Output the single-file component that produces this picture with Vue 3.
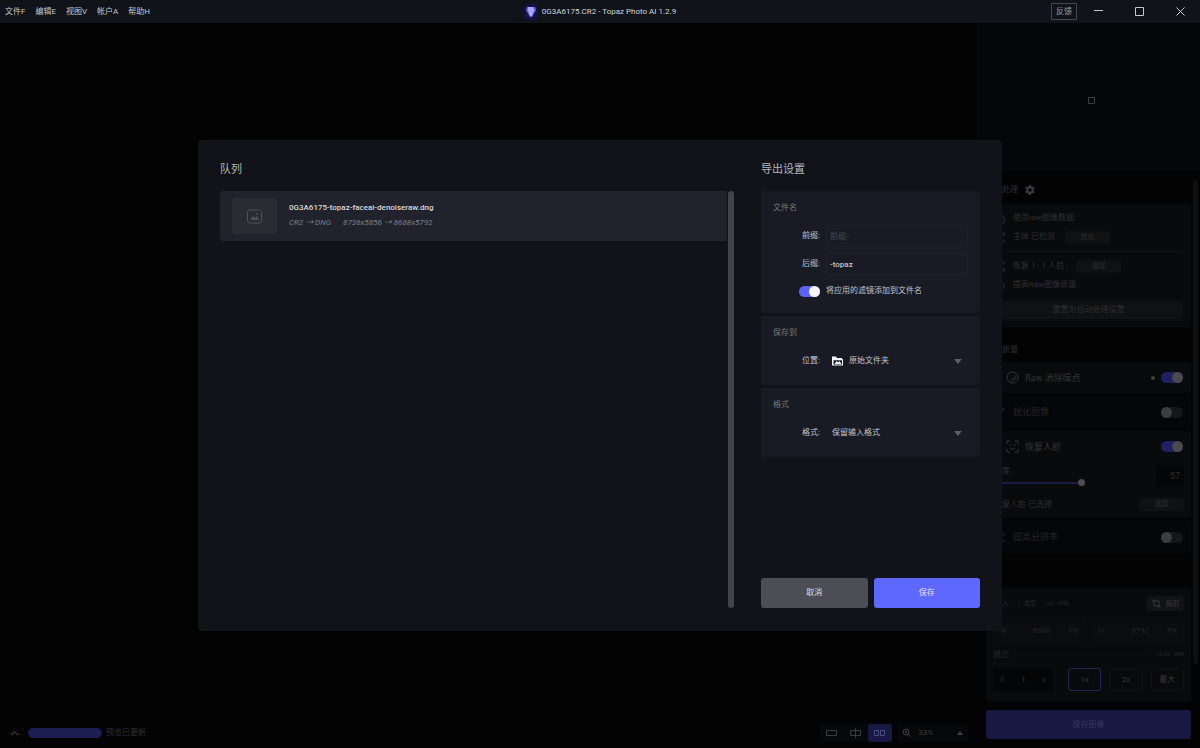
<script setup>
import { ref } from 'vue'

const menus = ['文件F', '编辑E', '视图V', '帐户A', '帮助H']
const suffix = ref('-topaz')
const prefix = ref('')
const addFilters = ref(true)
const denoise = ref(true)
const sharpen = ref(false)
const face = ref(true)
const upscale = ref(false)
const strength = ref(57)
</script>

<template>
  <div class="app">
    <header class="titlebar">
      <nav class="menus">
        <button v-for="m in menus" :key="m">{{ m }}</button>
      </nav>
      <div class="title">
        <svg class="logo" width="14" height="16" viewBox="0 0 14 16">
          <rect width="14" height="16" rx="4" fill="#15124a" />
          <path d="M3 3h8l1 3-4 7H6L2 6z" fill="#6a66dd" />
          <path d="M4 3h5l1 3-2 6H6L4 6z" fill="#aaa6ff" />
        </svg>
        <span>0G3A6175.CR2 - Topaz Photo AI 1.2.9</span>
      </div>
      <div class="window">
        <button class="feedback">反馈</button>
        <button aria-label="最小化"><svg width="11" height="11" viewBox="0 0 11 11"><path d="M1 4.500h9" /></svg></button>
        <button aria-label="最大化"><svg width="11" height="11" viewBox="0 0 11 11"><path d="M1.500 1.500h8v8h-8z" /></svg></button>
        <button aria-label="关闭"><svg width="11" height="11" viewBox="0 0 11 11"><path d="M1.500 1.500l8 8M9.500 1.500l-8 8" /></svg></button>
      </div>
    </header>

    <div class="body">
      <main class="stage">
        <footer class="status">
          <button class="up" aria-label="展开"><svg width="9" height="7" viewBox="0 0 9 7"><path d="M1 5l3.500-3L8 5" /></svg></button>
          <div class="progress" role="progressbar" aria-label="进度"></div>
          <span class="grow">预览已更新</span>
          <div class="views">
            <button aria-label="单视图"><svg width="12" height="10" viewBox="0 0 12 10"><path d="M.5 2.500h10v5H.5z" /></svg></button>
            <button aria-label="分割视图"><svg width="12" height="10" viewBox="0 0 12 10"><path d="M5 2.500H.5v5H5M6 2.500h4.500v5H6M5.500 0v10" /></svg></button>
            <button class="on" aria-label="并排视图"><svg width="12" height="10" viewBox="0 0 12 10"><path d="M.5 2.500h4v5h-4zM6.500 2.500h4v5h-4z" /></svg></button>
          </div>
          <button class="zoom">
            <svg width="10" height="10" viewBox="0 0 10 10"><circle cx="4" cy="4" r="3" /><path d="M6 6l3 3M2.500 4h3M4 2.500v3" /></svg>
            <span>33%</span>
            <svg class="solid" width="8" height="6" viewBox="0 0 8 6"><path d="M1 5l3-4 3 4z" /></svg>
          </button>
        </footer>
      </main>

      <aside class="side">
        <section class="navigator"><i></i></section>
        <div class="scroll">
          <div class="panels">
            <h2 class="auto">自动处理
              <svg width="10" height="10" viewBox="0 0 10 10"><circle cx="5" cy="5" r="2.800" stroke-width="2" /><path d="M5 0v2M5 8v2M.7 2.500l1.700 1M7.600 6.500l1.700 1M.7 7.500l1.700-1M7.600 3.500l1.700-1" stroke-width="2" /></svg>
            </h2>
            <section class="card detect">
              <p><svg width="11" height="11" viewBox="0 0 11 11"><path d="M2 1h5l3 3v6H2z" /></svg>使用raw图像数据.</p>
              <p><svg width="11" height="11" viewBox="0 0 11 11"><path d="M1 4V1h3M7 1h3v3M10 7v3H7M4 10H1V7" /><circle cx="5.500" cy="5.500" r="1.500" /></svg>主体 已检测. <button>优化</button></p>
              <hr />
              <p><svg width="11" height="11" viewBox="0 0 11 11"><path d="M1 4V1h3M7 1h3v3M10 7v3H7M4 10H1V7M3.500 6.500l2 1 2-1" /></svg>恢复 1 - 1 人脸 . <button>选择</button></p>
              <p><svg width="11" height="11" viewBox="0 0 11 11"><circle cx="5.500" cy="5.500" r="4.500" /></svg>提高Raw图像质量.</p>
              <button class="reset">重置为自动处理设置</button>
            </section>
            <h2 class="quality">高质量</h2>
            <section class="card tool indent">
              <svg width="13" height="13" viewBox="0 0 13 13"><circle cx="6.500" cy="6.500" r="5.500" /><path class="shade" d="M10 3.500A5 5 0 0 1 3.500 10.200z" /></svg>
              <label for="denoise">Raw 消除噪点</label><b class="dot"></b>
              <input id="denoise" v-model="denoise" type="checkbox" class="switch" />
            </section>
            <section class="card tool off">
              <svg width="11" height="11" viewBox="0 0 11 11"><path d="M1 10h4L10 1z" /></svg>
              <label for="sharpen">锐化图像</label>
              <input id="sharpen" v-model="sharpen" type="checkbox" class="switch" />
            </section>
            <section class="card face">
              <div class="tool indent">
                <svg width="13" height="13" viewBox="0 0 13 13"><path d="M1 4V1h3M9 1h3v3M12 9v3H9M4 12H1V9M4 4v1.500M9 4v1.500M4 8l2.500 1.500L9 8" /></svg>
                <label for="face">恢复人脸</label>
                <input id="face" v-model="face" type="checkbox" class="switch" />
              </div>
              <div class="strength">
                <div>
                  <label for="strength">强度</label>
                  <input id="strength" v-model="strength" type="range" />
                </div>
                <output for="strength">{{ strength }}</output>
              </div>
              <div class="chosen"><span>恢复人脸 已选择</span><button>选择</button></div>
            </section>
            <section class="card tool off">
              <svg width="11" height="11" viewBox="0 0 11 11"><path d="M1 4V1h3M7 1h3v3M10 7v3H7M4 10H1V7" /></svg>
              <label for="upscale">提高分辨率</label>
              <input id="upscale" v-model="upscale" type="checkbox" class="switch" />
            </section>
            <section class="card resize">
              <div class="line"><span>输入</span><small class="grow">| 类型: ~88.3MB</small>
                <button class="crop"><svg width="9" height="9" viewBox="0 0 9 9"><path d="M2 0v7h7M0 2h7v7" /></svg>裁剪</button></div>
              <div class="dims">
                <label><span>W</span><input value="8688" aria-label="宽度" /><span>PX</span></label>
                <label><span>H</span><input value="5792" aria-label="高度" /><span>PX</span></label>
              </div>
              <div class="line out"><span>输出</span><i></i><small>~248.9MB</small></div>
              <div class="scales">
                <label class="custom"><span>S</span><input value="1" aria-label="缩放" /><span>x</span></label>
                <button class="on">1x</button><button>2x</button><button>最大</button>
              </div>
            </section>
          </div>
          <div class="rail"></div>
        </div>
        <button class="export">保存图像</button>
      </aside>

      <div class="veil">
        <section class="dialog" role="dialog" aria-modal="true">
          <div class="queue">
            <h1>队列</h1>
            <div class="list">
              <ul>
                <li>
                  <div class="thumb">
                    <svg width="17" height="15" viewBox="0 0 17 15"><rect x="1.500" y="1" width="14" height="13" rx="2" /><path class="fill" d="M4 11l3-4 2 2 2-2 2 4z" /><circle class="fill" cx="11" cy="5" r="1" /></svg>
                  </div>
                  <div class="info">
                    <strong>0G3A6175-topaz-faceai-denoiseraw.dng</strong>
                    <p><span>CR2 → DNG</span><span>8736x5856 → 8688x5792</span></p>
                  </div>
                </li>
              </ul>
              <div class="bar"></div>
            </div>
          </div>
          <form class="settings" @submit.prevent>
            <h1>导出设置</h1>
            <section class="group">
              <h3>文件名</h3>
              <div class="field"><label for="prefix">前缀:</label><input id="prefix" v-model="prefix" placeholder="前缀-" /></div>
              <div class="field"><label for="suffix">后缀:</label><input id="suffix" v-model="suffix" /></div>
              <label class="append"><input v-model="addFilters" type="checkbox" class="switch bright" />将应用的滤镜添加到文件名</label>
            </section>
            <section class="group choice">
              <h3>保存到</h3>
              <div class="field">
                <label for="place">位置:</label>
                <svg class="folder" width="11" height="10" viewBox="0 0 11 10"><path fill="#f4f5f8" fill-rule="evenodd" d="M0 .5h4l1 1.500h5v1h1v6.500H0zM1.500 4.200V8.500h8.500V4.200z" /><path fill="#f4f5f8" d="M2.500 8l2-3 1.500 1.500L7.500 5 9.500 8z" /></svg>
                <select id="place"><option>原始文件夹</option></select>
                <svg class="arrow" width="8" height="6" viewBox="0 0 8 6"><path d="M0 1h8L4 6z" /></svg>
              </div>
            </section>
            <section class="group choice">
              <h3>格式</h3>
              <div class="field">
                <label for="format">格式:</label>
                <select id="format"><option>保留输入格式</option></select>
                <svg class="arrow" width="8" height="6" viewBox="0 0 8 6"><path d="M0 1h8L4 6z" /></svg>
              </div>
            </section>
            <div class="actions">
              <button type="button">取消</button>
              <button class="primary">保存</button>
            </div>
          </form>
        </section>
      </div>
    </div>
  </div>
</template>

<style>
body { background: #030304; }
</style>

<style scoped>
.app, .app * { box-sizing: border-box; }
.app {
  display: flex; flex-direction: column; min-height: 100vh;
  font: 8px/12px Roboto, "Noto Sans CJK SC", sans-serif; color: #2e2f31;
}
button, input, select { font: inherit; color: inherit; border: 0; background: none; padding: 0; margin: 0; min-width: 0; }
h1, h2, h3, p, ul { margin: 0; padding: 0; font-weight: 400; font-size: 8px; list-style: none; }
svg { fill: none; stroke: currentColor; flex: none; }
.fill, .solid { fill: currentColor; stroke: none; }
.shade { fill: #1c1d1f; stroke: none; }
.grow { flex: 1; }

.titlebar {
  display: grid; grid-template-columns: 1fr auto 1fr; align-items: center;
  height: 23px; background: #101318; color: #c6c8cb;
}
.menus { display: flex; gap: 10px; padding-left: 5px; }
.title { display: flex; align-items: center; gap: 4px; color: #d4d6da; }
.logo { stroke: none; }
.window { display: flex; justify-content: flex-end; align-items: center; gap: 30px; padding-right: 14px; }
.window button { display: flex; }
.window .feedback { border: 1px solid #45484e; padding: 2px 4px 1px; border-radius: 1px; margin-right: -14px; color: #9b9ea5; }

.body { flex: 1; display: flex; position: relative; }
.stage { flex: 1; display: flex; flex-direction: column; justify-content: flex-end; background: #030304; }
.status { display: flex; align-items: center; height: 31px; padding: 0 9px; color: #303134; border-top: 1px solid #060608; }
.up { display: flex; padding: 4px 1px; color: #55565a; }
.progress { width: 74px; height: 10px; border-radius: 5px; background: #1c1f52; margin: 0 4px 0 8px; }
.views { display: flex; }
.views button { display: grid; place-items: center; width: 24px; height: 18px; color: #3c3d40; background: #060709; }
.views .on { background: #171943; color: #4a4c84; border-radius: 2px; }
.zoom { display: flex; align-items: center; gap: 6px; margin-left: 6px; padding: 3px 4px; background: #060709; color: #3d3e41; }
.zoom .solid { margin-left: 17px; }

.side { width: 223px; display: flex; flex-direction: column; background: #030304; }
.navigator { height: 148px; display: grid; place-items: center; background: #050608; }
.navigator i { width: 7px; height: 7px; border: 1px solid #3a3b3e; margin: 6px 0 0 5px; }
.scroll { flex: 1; display: flex; gap: 2px; padding-left: 9px; }
.panels { flex: 1; }
.rail { width: 5px; margin: 9px 2px 38px 0; border-radius: 2px; background: #0e0f11; }
.auto { display: flex; align-items: center; gap: 7px; height: 33px; padding-top: 4px; }
.auto svg { color: #3a3b3d; }
.card { background: #090a0c; margin-bottom: 3px; border-radius: 2px; }
.detect { height: 123px; padding: 5px 8px 8px 8px; margin-bottom: 0; }
.detect p { display: flex; align-items: center; gap: 8px; height: 18px; }
.detect p + p { height: 20px; }
.detect p button, .chosen button { width: 45px; height: 13px; font-size: 7px; line-height: 13px; border-radius: 3px; background: #101113; }
.detect hr { border: 0; border-top: 1px solid #121315; margin: 4px 0 5px; }
.reset { width: 100%; height: 18px; border-radius: 3px; background: #101113; margin-top: 6px; }
.quality { height: 35px; padding: 17px 8px 0; }
.tool { display: flex; align-items: center; gap: 8px; height: 31px; padding: 0 8px; }
.tool label { flex: 1; }
.indent { padding-left: 20px; gap: 6px; font-size: 9px; color: #343537; }
.off { background: #050607; color: #242527; height: 32px; }
.off label { font-size: 9px; }
.dot { width: 4px; height: 4px; border-radius: 50%; background: #3b413c; }
.switch {
  appearance: none; display: flex; width: 22px; height: 11px; border-radius: 6px; background: #151617; align-items: center;
}
.switch::before { content: ""; width: 11px; height: 11px; border-radius: 50%; background: #3d3d3e; }
.switch:checked { background: #1d2062; justify-content: flex-end; }
.switch:checked::before { background: #4a4a4d; }
.switch.bright { width: 21px; background: #5c62f5; }
.switch.bright::before { background: #f5f5fb; }
.face { height: 87px; }
.strength { display: flex; gap: 8px; padding: 3px 7px 0 8px; }
.strength > div { flex: 1; }
.strength label { display: block; height: 14px; }
.strength input { appearance: none; display: block; width: 100%; height: 7px; background: linear-gradient(#1b1e4a, #1b1e4a) 0 3px / 57% 2px no-repeat; }
.strength input::-webkit-slider-thumb { appearance: none; width: 7px; height: 7px; border-radius: 50%; background: #4c4d50; }
.strength output { width: 28px; height: 22px; line-height: 22px; background: #040506; text-align: right; padding-right: 4px; font-size: 9px; }
.chosen { display: flex; justify-content: space-between; align-items: center; padding: 11px 7px 0 8px; }
.resize { margin: 35px 0 0; padding: 8px 7px 11px; height: 114px; color: #242527; }
.line { display: flex; align-items: center; gap: 8px; height: 15px; }
.line small { font: 6px/12px "Liberation Mono", "Noto Sans CJK SC", monospace; }
.crop { display: flex; align-items: center; justify-content: center; gap: 5px; width: 37px; height: 15px; font-size: 7px; border-radius: 2px; background: #121315; color: #36373a; }
.dims { display: grid; grid-template-columns: 1fr 1fr; gap: 6px; margin: 8px 0 6px; }
.dims label { display: flex; align-items: center; height: 24px; padding: 0 7px; background: #0b0c0e; border-radius: 2px; }
.dims input { flex: 1; width: 0; text-align: right; margin-right: 18px; }
.out { height: 12px; gap: 6px; }
.out i { flex: 1; border-top: 1px solid #0f1012; }
.scales { display: flex; gap: 8px; margin-top: 7px; color: #38393c; }
.scales button { flex: 1; height: 23px; border: 1px solid #111214; border-radius: 3px; }
.scales .on { border-color: #232653; }
.scales .custom { display: flex; align-items: center; width: 60px; height: 23px; padding: 0 7px; margin-right: 7px; background: #040506; color: #27282a; }
.custom input { flex: 1; width: 0; text-align: center; color: #38393c; }
.export { height: 29px; margin: 8px 9px 9px; border-radius: 3px; background: #171942; color: #343665; }

.veil { position: absolute; inset: 0; display: grid; place-items: center; }
.dialog {
  display: grid; grid-template-columns: 1fr 219px; gap: 27px; width: 67%; min-height: 491px; padding: 21px 22px 23px;
  background: #121318; border-radius: 4px; color: #c3c5ca;
}
.dialog h1 { font-size: 11px; line-height: 17px; margin-bottom: 13px; color: #b4b6bb; }
.queue, .settings { display: flex; flex-direction: column; }
.list { flex: 1; display: flex; gap: 1px; }
.list ul { flex: 1; }
.bar { width: 6px; border-radius: 3px; background: #424449; }
.list li { display: flex; align-items: center; gap: 12px; height: 50px; padding: 0 12px; border-radius: 2px; background: #20232b; }
.thumb { display: grid; place-items: center; width: 45px; height: 36px; border-radius: 3px; background: #2a2c32; color: #4d5056; }
.info { padding-bottom: 3px; }
.list strong { display: block; font-weight: 500; color: #d7d9dd; line-height: 16px; }
.list p { display: flex; gap: 12px; font-style: italic; color: #7c8088; line-height: 14px; }
.group { background: #181b23; border-radius: 2px; margin-bottom: 3px; padding: 10px 12px; height: 122px; }
.group h3 { line-height: 13px; color: #74777e; margin-bottom: 11px; }
.field { display: flex; align-items: center; margin-bottom: 6px; }
.field label { width: 47px; text-align: right; margin-right: 6px; }
.field input { flex: 1; height: 22px; padding: 0 3px; border: 1px solid #1f222a; border-radius: 2px; font-weight: 500; }
.field input::placeholder { color: #41444b; opacity: 1; }
.append { display: flex; align-items: center; gap: 6px; padding-left: 26px; margin-top: 10px; }
.choice { height: 69px; }
.choice .field { height: 22px; }
.choice select { appearance: none; flex: 1; height: 22px; padding-left: 6px; }
.folder { margin-left: 6px; stroke: none; }
.arrow { fill: #5c5f66; stroke: none; margin-right: 6px; }
.actions { display: grid; grid-template-columns: 1fr 1fr; gap: 6px; margin-top: auto; }
.actions button { height: 30px; border-radius: 3px; background: #4b4f55; color: #dcdee1; }
.actions .primary { background: #5f68fe; color: #dfe1ff; }
</style>
